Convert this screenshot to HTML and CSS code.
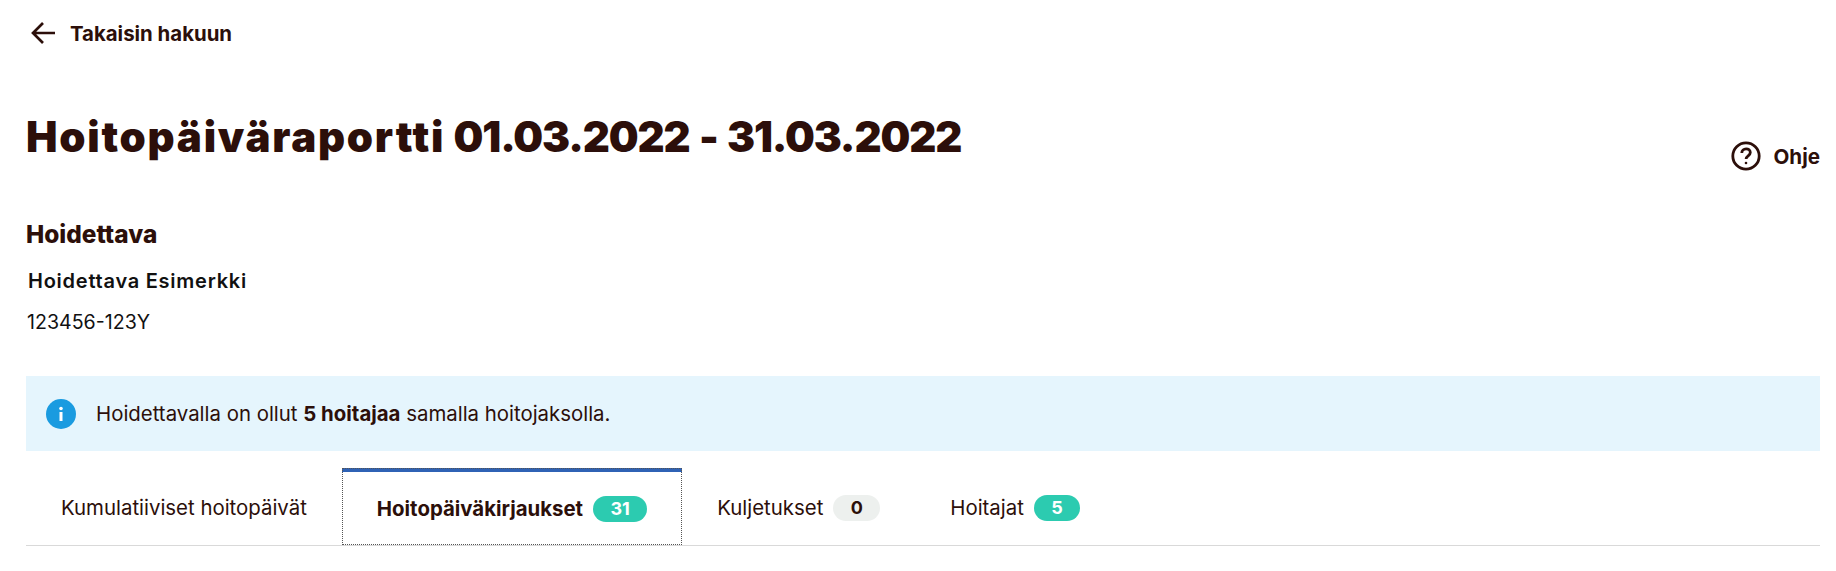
FILE: index.html
```html
<!DOCTYPE html>
<html lang="fi">
<head>
  <meta charset="UTF-8">
  <title>Hoitopäiväraportti</title>
  <link rel="stylesheet" href="styles.css">
</head>
<body>
  <a class="back-link" href="#">
    <svg class="back-icon" width="26" height="24" viewBox="0 0 26 24" fill="none" stroke="#2c0f0a" stroke-width="2.7"><path d="M25 12H3M13 2 3 12l10 10"/></svg>
    Takaisin hakuun
  </a>
  <div class="title-row">
    <h1><span class="title-word">Hoitopäiväraportti</span> <span class="title-dates">01.03.2022 - 31.03.2022</span></h1>
    <a class="help" href="#">
      <svg width="30" height="30" viewBox="0 0 30 30" fill="none" stroke="#2c0f0a" stroke-width="2.8"><circle cx="15" cy="15" r="13.2"/><path d="M10.8 12c0-2.6 1.9-4.2 4.3-4.2s4.2 1.6 4.2 3.8c0 3.2-4.2 3.3-4.2 6.4"/><circle cx="15" cy="22" r="1.3" fill="#2c0f0a" stroke="none"/></svg>
      Ohje
    </a>
  </div>
  <h2>Hoidettava</h2>
  <p class="name">Hoidettava Esimerkki</p>
  <p class="ssn">123456-123Y</p>
  <div class="notice">
    <svg width="30" height="30" viewBox="0 0 30 30"><circle cx="15" cy="15" r="15" fill="#1a9be0"/><rect x="13.5" y="13" width="3" height="9" fill="#fff"/><circle cx="15" cy="9.5" r="1.8" fill="#fff"/></svg>
    <span>Hoidettavalla on ollut <strong>5 hoitajaa</strong> samalla hoitojaksolla.</span>
  </div>
  <div class="tabs">
    <div class="tab">Kumulatiiviset hoitopäivät</div>
    <div class="tab active">Hoitopäiväkirjaukset <span class="badge">31</span></div>
    <div class="tab">Kuljetukset <span class="badge empty">0</span></div>
    <div class="tab">Hoitajat <span class="badge">5</span></div>
  </div>
</body>
</html>
```

FILE: styles.css
```css
body {
  margin: 0;
  padding: 0 16px 0 26px;
  font-family: Inter, sans-serif;
  color: #2c0f0a;
  background-color: #fff;
}
.back-link {
  display: flex;
  align-items: center;
  gap: 14px;
  height: 32px;
  margin-top: 17px;
  font-size: 20.4px;
  font-weight: 700;
  color: #2c0f0a;
  text-decoration: none;
}
.back-icon {
  margin-left: 4px;
}
.title-row {
  display: flex;
  justify-content: space-between;
  align-items: flex-end;
  margin-top: 62px;
}
h1 {
  margin: 0;
  font-size: 42px;
  line-height: 52px;
  font-weight: 900;
}
.title-word {
  letter-spacing: 1.75px;
}
.title-dates {
  letter-spacing: -1.12px;
  word-spacing: 2px;
}
.help {
  display: flex;
  align-items: center;
  gap: 12px;
  margin-bottom: -8px;
  font-size: 20.6px;
  font-weight: 700;
  color: #2c0f0a;
  text-decoration: none;
}
h2 {
  margin: 57px 0 0;
  font-size: 24.4px;
  line-height: 28px;
  font-weight: 800;
}
.name {
  margin: 20px 0 0 2px;
  font-size: 20px;
  line-height: 26px;
  font-weight: 600;
  letter-spacing: .75px;
  color: #111;
}
.ssn {
  margin: 15px 0 0 1px;
  font-size: 19.6px;
  line-height: 26px;
  color: #111;
}
.notice {
  display: flex;
  align-items: center;
  gap: 20px;
  height: 75px;
  margin-top: 41px;
  padding-left: 20px;
  background-color: #e5f5fd;
  font-size: 20.4px;
}
.tabs {
  display: flex;
  height: 78px;
  margin-top: 17px;
  border-bottom: 1px solid #d9d9d9;
  box-sizing: border-box;
  font-size: 20.4px;
}
.tab {
  display: flex;
  align-items: center;
  gap: 10px;
  padding: 2px 35px 0;
}
.tab.active {
  padding-top: 0;
  font-weight: 700;
  border-top: 4px solid #2f62b5;
  outline: 1px dotted #555;
  outline-offset: -1px;
}
.badge {
  min-width: 46px;
  box-sizing: border-box;
  padding: 0 17.4px;
  border-radius: 13px;
  background-color: #2ccbb0;
  color: #fff;
  font-size: 18px;
  font-weight: 700;
  line-height: 26px;
  text-align: center;
}
.badge.empty {
  background-color: #edf0ee;
  color: #2c0f0a;
}
```
